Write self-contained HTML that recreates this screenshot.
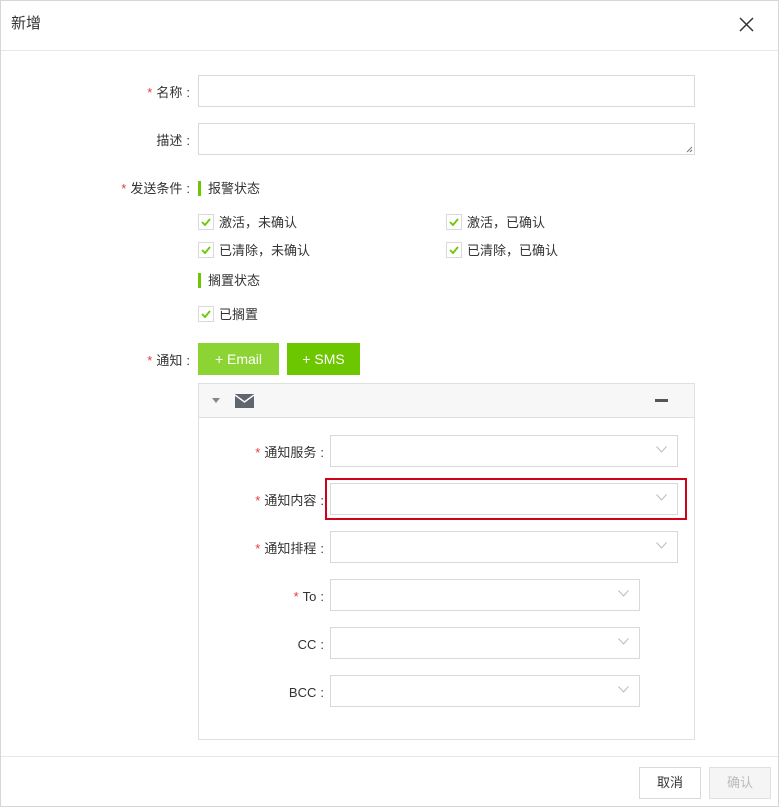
<!DOCTYPE html>
<html><head><meta charset="utf-8"><style>
*{box-sizing:border-box;margin:0;padding:0}
body{width:779px;height:807px;background:#fff;font-family:"Liberation Sans","Noto Sans CJK SC",sans-serif;font-size:13px;color:#333;position:relative;overflow:hidden}
.a{position:absolute}
.frame{left:0;top:0;width:779px;height:807px;border:1px solid #d6d6d6}
.inp{position:absolute;border:1px solid #d9d9d9;background:#fff}
.lbl{position:absolute;text-align:right;line-height:16px;white-space:nowrap}
.lbl i{font-style:normal;margin-left:4px}
.req{color:#e4393c;margin-right:4px}
.cb{position:absolute;width:16px;height:16px;border:1px solid #d9d9d9;background:#fff}
.cb svg{position:absolute;left:1px;top:1px}
.t{position:absolute;line-height:16px;white-space:nowrap}
.bar{position:absolute;width:3px;height:15px;background:#6cc700}
.chev{position:absolute;right:10px;top:10px}
</style></head><body>
<div class="a frame"></div>
<div class="t" style="left:11px;top:16px;font-size:15px">新增</div>
<svg class="a" style="left:739px;top:17px" width="15" height="15" viewBox="0 0 15 15"><path d="M1 1L14 14M14 1L1 14" stroke="#333" stroke-width="1.5"/></svg>
<div class="a" style="left:1px;top:50px;width:777px;height:1px;background:#e8e8e8"></div>

<div class="lbl" style="right:589px;top:85px"><span class="req">*</span>名称<i>:</i></div>
<div class="inp" style="left:198px;top:75px;width:497px;height:32px"></div>
<div class="lbl" style="right:589px;top:133px">描述<i>:</i></div>
<div class="inp" style="left:198px;top:123px;width:497px;height:32px"></div>
<svg class="a" style="left:686px;top:146px" width="7" height="7"><path d="M1 6L6 1M4 6L6 4" stroke="#777" stroke-width="1"/></svg>

<div class="lbl" style="right:589px;top:181px"><span class="req">*</span>发送条件<i>:</i></div>
<div class="bar" style="left:198px;top:181px"></div>
<div class="t" style="left:208px;top:181px">报警状态</div>

<div class="cb" style="left:198px;top:214px"><svg width="12" height="12"><path d="M2 6L5 9L10 3" stroke="#6cc700" stroke-width="1.8" fill="none"/></svg></div>
<div class="t" style="left:219px;top:215px">激活，未确认</div>
<div class="cb" style="left:446px;top:214px"><svg width="12" height="12"><path d="M2 6L5 9L10 3" stroke="#6cc700" stroke-width="1.8" fill="none"/></svg></div>
<div class="t" style="left:467px;top:215px">激活，已确认</div>
<div class="cb" style="left:198px;top:242px"><svg width="12" height="12"><path d="M2 6L5 9L10 3" stroke="#6cc700" stroke-width="1.8" fill="none"/></svg></div>
<div class="t" style="left:219px;top:243px">已清除，未确认</div>
<div class="cb" style="left:446px;top:242px"><svg width="12" height="12"><path d="M2 6L5 9L10 3" stroke="#6cc700" stroke-width="1.8" fill="none"/></svg></div>
<div class="t" style="left:467px;top:243px">已清除，已确认</div>

<div class="bar" style="left:198px;top:273px"></div>
<div class="t" style="left:208px;top:273px">搁置状态</div>
<div class="cb" style="left:198px;top:306px"><svg width="12" height="12"><path d="M2 6L5 9L10 3" stroke="#6cc700" stroke-width="1.8" fill="none"/></svg></div>
<div class="t" style="left:219px;top:307px">已搁置</div>

<div class="lbl" style="right:589px;top:353px"><span class="req">*</span>通知<i>:</i></div>
<div class="a" style="left:198px;top:343px;width:81px;height:32px;background:#8bd433;color:#fff;text-align:center;line-height:32px;font-size:14px">+ Email</div>
<div class="a" style="left:287px;top:343px;width:73px;height:32px;background:#6cc700;color:#fff;text-align:center;line-height:32px;font-size:14px">+ SMS</div>

<div class="a" style="left:198px;top:383px;width:497px;height:357px;border:1px solid #e0e0e0"></div>
<div class="a" style="left:199px;top:384px;width:495px;height:34px;background:#f7f7f7;border-bottom:1px solid #e0e0e0"></div>
<svg class="a" style="left:212px;top:398px" width="8" height="5"><path d="M0 0H8L4 5Z" fill="#888"/></svg>
<svg class="a" style="left:235px;top:394px" width="19" height="14"><rect width="19" height="14" fill="#5f6670"/><path d="M0 1L9.5 8L19 1" stroke="#fff" stroke-width="1.5" fill="none"/></svg>
<div class="a" style="left:655px;top:399px;width:13px;height:3px;background:#555"></div>

<div class="lbl" style="right:455px;top:445px"><span class="req">*</span>通知服务<i>:</i></div>
<div class="inp" style="left:330px;top:435px;width:348px;height:32px"><svg class="chev" width="11" height="7"><path d="M0.5 0.5L5.5 6L10.5 0.5" stroke="#bbb" fill="none"/></svg></div>
<div class="a" style="left:325px;top:478px;width:362px;height:42px;border:2px solid #d0021b"></div>
<div class="lbl" style="right:455px;top:493px"><span class="req">*</span>通知内容<i>:</i></div>
<div class="inp" style="left:330px;top:483px;width:348px;height:32px"><svg class="chev" width="11" height="7"><path d="M0.5 0.5L5.5 6L10.5 0.5" stroke="#bbb" fill="none"/></svg></div>
<div class="lbl" style="right:455px;top:541px"><span class="req">*</span>通知排程<i>:</i></div>
<div class="inp" style="left:330px;top:531px;width:348px;height:32px"><svg class="chev" width="11" height="7"><path d="M0.5 0.5L5.5 6L10.5 0.5" stroke="#bbb" fill="none"/></svg></div>
<div class="lbl" style="right:455px;top:589px"><span class="req">*</span>To<i>:</i></div>
<div class="inp" style="left:330px;top:579px;width:310px;height:32px"><svg class="chev" width="11" height="7"><path d="M0.5 0.5L5.5 6L10.5 0.5" stroke="#bbb" fill="none"/></svg></div>
<div class="lbl" style="right:455px;top:637px">CC<i>:</i></div>
<div class="inp" style="left:330px;top:627px;width:310px;height:32px"><svg class="chev" width="11" height="7"><path d="M0.5 0.5L5.5 6L10.5 0.5" stroke="#bbb" fill="none"/></svg></div>
<div class="lbl" style="right:455px;top:685px">BCC<i>:</i></div>
<div class="inp" style="left:330px;top:675px;width:310px;height:32px"><svg class="chev" width="11" height="7"><path d="M0.5 0.5L5.5 6L10.5 0.5" stroke="#bbb" fill="none"/></svg></div>

<div class="a" style="left:1px;top:756px;width:777px;height:1px;background:#e8e8e8"></div>
<div class="a" style="left:639px;top:767px;width:62px;height:32px;border:1px solid #d9d9d9;text-align:center;line-height:30px">取消</div>
<div class="a" style="left:709px;top:767px;width:62px;height:32px;border:1px solid #e0e0e0;background:#f5f5f5;color:#bbb;text-align:center;line-height:30px">确认</div>
</body></html>
